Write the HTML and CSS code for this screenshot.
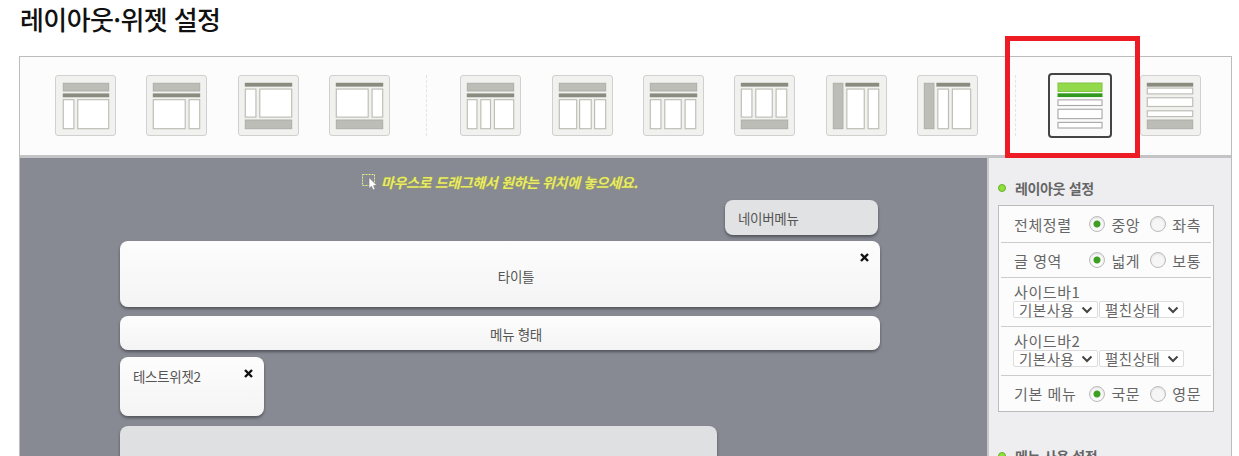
FILE: index.html
```html
<!DOCTYPE html>
<html lang="ko">

<head>
    <meta charset="UTF-8">
    <title>레이아웃·위젯 설정</title>
    <link rel="stylesheet" href="styles.css">
</head>

<body>
    <h1 class="page-title">레이아웃·위젯 설정</h1>

    <div class="frame">
        <div class="toolbar">
            <div class="thumbs">
                <svg class="thumb" viewBox="0 0 61 61"><rect class="fill" x="7.5" y="7.5" width="47" height="8"/><rect class="bar" x="7" y="18" width="48" height="4"/><rect class="col" x="7.5" y="24.5" width="11" height="30"/><rect class="col" x="22.5" y="24.5" width="32" height="30"/></svg>
                <svg class="thumb" viewBox="0 0 61 61"><rect class="fill" x="6.5" y="7.5" width="48" height="8"/><rect class="bar" x="6" y="18" width="49" height="4"/><rect class="col" x="6.5" y="24.5" width="33" height="30"/><rect class="col" x="43.5" y="24.5" width="11" height="30"/></svg>
                <svg class="thumb" viewBox="0 0 61 61"><rect class="bar" x="6" y="7" width="49" height="4"/><rect class="col" x="6.5" y="13.5" width="11" height="29"/><rect class="col" x="21.5" y="13.5" width="33" height="29"/><rect class="fill" x="6.5" y="45.5" width="48" height="9"/></svg>
                <svg class="thumb" viewBox="0 0 61 61"><rect class="bar" x="6" y="7" width="49" height="4"/><rect class="col" x="6.5" y="13.5" width="33" height="29"/><rect class="col" x="43.5" y="13.5" width="11" height="29"/><rect class="fill" x="6.5" y="45.5" width="48" height="9"/></svg>
            </div>
            <div class="sep sep-one"></div>
            <div class="thumbs">
                <svg class="thumb" viewBox="0 0 61 61"><rect class="fill" x="6.5" y="7.5" width="48" height="8"/><rect class="bar" x="6" y="18" width="49" height="4"/><rect class="col" x="6.5" y="24.5" width="10" height="30"/><rect class="col" x="20.5" y="24.5" width="10" height="30"/><rect class="col" x="34.5" y="24.5" width="20" height="30"/></svg>
                <svg class="thumb" viewBox="0 0 61 61"><rect class="fill" x="6.5" y="7.5" width="48" height="8"/><rect class="bar" x="6" y="18" width="49" height="4"/><rect class="col" x="6.5" y="24.5" width="18" height="30"/><rect class="col" x="27.5" y="24.5" width="12" height="30"/><rect class="col" x="43" y="24.5" width="11.5" height="30"/></svg>
                <svg class="thumb" viewBox="0 0 61 61"><rect class="fill" x="6.5" y="7.5" width="48" height="8"/><rect class="bar" x="6" y="18" width="49" height="4"/><rect class="col" x="6.5" y="24.5" width="11" height="30"/><rect class="col" x="21.5" y="24.5" width="17" height="30"/><rect class="col" x="42.5" y="24.5" width="11" height="30"/></svg>
                <svg class="thumb" viewBox="0 0 61 61"><rect class="bar" x="6" y="7" width="49" height="4"/><rect class="col" x="6.5" y="13.5" width="11" height="29"/><rect class="col" x="21.5" y="13.5" width="17" height="29"/><rect class="col" x="42.5" y="13.5" width="11" height="29"/><rect class="fill" x="6.5" y="45.5" width="48" height="9"/></svg>
                <svg class="thumb" viewBox="0 0 61 61"><rect class="fill" x="6.5" y="7.5" width="10" height="47"/><rect class="bar" x="19" y="7" width="35" height="4"/><rect class="col" x="20.5" y="13.5" width="18" height="41"/><rect class="col" x="42.5" y="13.5" width="11" height="41"/></svg>
                <svg class="thumb" viewBox="0 0 61 61"><rect class="fill" x="6.5" y="7.5" width="10" height="47"/><rect class="bar" x="19" y="7" width="35" height="4"/><rect class="col" x="20.5" y="13.5" width="11" height="41"/><rect class="col" x="35.5" y="13.5" width="19" height="41"/></svg>
            </div>
            <div class="sep sep-two"></div>
            <svg class="thumb thumb-on" viewBox="0 0 64 65"><rect class="fill-on" x="8.5" y="8.5" width="47" height="9"/><rect class="bar-on" x="8" y="19.5" width="48" height="4"/><rect class="col-on" x="8.5" y="26.5" width="47" height="6"/><rect class="col-on" x="8.5" y="36.5" width="47" height="10"/><rect class="col-on" x="8.5" y="50.5" width="47" height="6"/></svg>
            <svg class="thumb thumb-last" viewBox="0 0 61 61"><rect class="bar" x="6" y="7" width="48" height="4"/><rect class="col" x="6.5" y="12.5" width="47" height="6"/><rect class="col" x="6.5" y="22.5" width="47" height="9"/><rect class="col" x="6.5" y="36" width="47" height="6"/><rect class="fill" x="6.5" y="45.5" width="47" height="9"/></svg>
        </div>

        <div class="workspace">
            <div class="canvas">
                <div class="hint">
                    <svg class="hint-icon" viewBox="0 0 18 18">
                        <rect class="hint-box" x="1.5" y="1.5" width="12" height="11"/>
                        <path class="hint-cursor" d="M8 4.5 V15.5 L10.5 13.3 L12 17 L14 16 L12.5 12.5 H16 Z"/>
                    </svg>
                    <span>마우스로 드래그해서 원하는 위치에 놓으세요.</span>
                </div>
                <div class="column">
                    <div class="card card-nav">네이버메뉴</div>
                    <div class="card card-title">
                        타이틀
                        <svg class="close" viewBox="0 0 9 9"><path d="M1 1 L8 8 M8 1 L1 8"/></svg>
                    </div>
                    <div class="card card-menu">메뉴 형태</div>
                    <div class="card card-widget">
                        테스트위젯2
                        <svg class="close" viewBox="0 0 9 9"><path d="M1 1 L8 8 M8 1 L1 8"/></svg>
                    </div>
                    <div class="card card-empty"></div>
                </div>
            </div>

            <div class="side">
                <h2 class="side-title">레이아웃 설정</h2>
                <div class="options">
                    <div class="opt-row">
                        <span class="opt-label">전체정렬</span>
                        <span class="radio on"></span><span class="radio-text">중앙</span>
                        <span class="radio"></span><span class="radio-text">좌측</span>
                    </div>
                    <div class="opt-row">
                        <span class="opt-label">글 영역</span>
                        <span class="radio on"></span><span class="radio-text">넓게</span>
                        <span class="radio"></span><span class="radio-text">보통</span>
                    </div>
                    <div class="opt-row opt-stack">
                        <div class="opt-name">사이드바1</div>
                        <div class="selects">
                            <div class="select">기본사용<svg class="chevron" viewBox="0 0 12 8"><path d="M1.5 1.5 L6 6 L10.5 1.5"/></svg></div>
                            <div class="select">펼친상태<svg class="chevron" viewBox="0 0 12 8"><path d="M1.5 1.5 L6 6 L10.5 1.5"/></svg></div>
                        </div>
                    </div>
                    <div class="opt-row opt-stack">
                        <div class="opt-name">사이드바2</div>
                        <div class="selects">
                            <div class="select">기본사용<svg class="chevron" viewBox="0 0 12 8"><path d="M1.5 1.5 L6 6 L10.5 1.5"/></svg></div>
                            <div class="select">펼친상태<svg class="chevron" viewBox="0 0 12 8"><path d="M1.5 1.5 L6 6 L10.5 1.5"/></svg></div>
                        </div>
                    </div>
                    <div class="opt-row">
                        <span class="opt-label">기본 메뉴</span>
                        <span class="radio on"></span><span class="radio-text">국문</span>
                        <span class="radio"></span><span class="radio-text">영문</span>
                    </div>
                </div>
                <h2 class="side-title side-next">메뉴 사용 설정</h2>
            </div>
        </div>
    </div>

    <div class="marker"></div>
</body>

</html>
```

FILE: styles.css
```css
html,
body {
    margin: 0;
    height: 456px;
    overflow: hidden;
    background: #fff;
}

body {
    position: relative;
    font-family: "Noto Sans CJK KR", "Noto Sans", sans-serif;
    color: #555;
}

.page-title {
    margin: 0 0 0 20px;
    height: 56px;
    font-size: 26px;
    font-weight: 500;
    line-height: 38px;
    letter-spacing: -0.6px;
    color: #111;
}

.frame {
    width: 1211px;
    margin-left: 19px;
    border: 1px solid #bcbcbc;
    border-bottom: 0;
}

.toolbar {
    display: flex;
    align-items: flex-start;
    height: 101px;
    padding: 18px 0 0 35px;
    box-sizing: border-box;
    background: #fcfcfc;
    border-bottom: 3px solid #c4c4c6;
}

.thumbs {
    display: flex;
    gap: 30.4px;
}

.thumb {
    display: block;
    flex: none;
    width: 61px;
    height: 61px;
    box-sizing: border-box;
    border: 1px solid #d0d0ce;
    border-radius: 3px;
    background: #f1f1f0;
}

.thumb-on {
    width: 64px;
    height: 65px;
    margin-top: -2px;
    margin-left: 32px;
    border: 2px solid #444;
    border-radius: 4px;
    background: #fafafa;
}

.thumb-last {
    margin-left: 28px;
}

.fill {
    fill: #bcbdb6;
    stroke: #adaea6;
}

.bar {
    fill: #8b8c80;
}

.col {
    fill: #fff;
    stroke: #bdbdb5;
    stroke-width: 1.2;
}

.fill-on {
    fill: #93d94c;
    stroke: #7cc23a;
}

.bar-on {
    fill: #2f9a1e;
}

.col-on {
    fill: #fff;
    stroke: #a8a8a8;
    stroke-width: 1.2;
}

.sep {
    flex: none;
    width: 0;
    height: 61px;
    border-left: 1px dashed #e4e4e4;
}

.sep-one {
    margin: 0 33px 0 36px;
}

.sep-two {
    margin-left: 37px;
}

.workspace {
    display: flex;
}

.canvas {
    flex: none;
    width: 967px;
    height: 300px;
    padding: 15px 0 0 100px;
    box-sizing: border-box;
    background: #878a93;
}

.hint {
    display: flex;
    align-items: center;
    gap: 2px;
    width: 760px;
    height: 18px;
    margin-bottom: 9px;
    padding-left: 241px;
    box-sizing: border-box;
    font-size: 14px;
    font-weight: 700;
    font-style: italic;
    letter-spacing: -0.35px;
    color: #e9ec62;
    text-shadow: 0 0 2px #9a9c50;
    white-space: nowrap;
}

.hint-icon {
    flex: none;
    width: 18px;
    height: 18px;
}

.hint-box {
    fill: none;
    stroke: #e9ec8a;
    stroke-dasharray: 2 1;
}

.hint-cursor {
    fill: #fff;
    stroke: #777;
    stroke-width: 0.6;
}

.column {
    width: 760px;
}

.card {
    position: relative;
    box-sizing: border-box;
    border-radius: 8px;
    background: linear-gradient(#fdfdfd, #f4f4f4);
    box-shadow: 0 2px 3px rgba(50, 50, 55, 0.6);
    font-size: 13.5px;
    letter-spacing: -0.3px;
    color: #555;
}

.card-nav {
    width: 153px;
    height: 35px;
    margin: 0 2px 6px auto;
    padding-left: 13px;
    line-height: 37px;
    background: #e1e2e3;
}

.card-title {
    height: 66px;
    margin-bottom: 9px;
    line-height: 70px;
    text-align: center;
    padding-left: 32px;
}

.card-menu {
    height: 34px;
    margin-bottom: 7px;
    line-height: 37px;
    text-align: center;
    padding-left: 32px;
}

.card-widget {
    width: 144px;
    height: 59px;
    margin-bottom: 10px;
    padding-left: 13px;
    line-height: 38px;
}

.card-empty {
    width: 597px;
    height: 120px;
    background: #dfe0e1;
}

.close {
    position: absolute;
    top: 12px;
    right: 11px;
    width: 9px;
    height: 9px;
}

.close path {
    fill: none;
    stroke: #111;
    stroke-width: 2.4;
}

.side {
    flex: 1;
    padding: 21px 0 0 9px;
    background: #eeeef0;
    border-left: 2px solid #c9c9cc;
    box-sizing: border-box;
}

.side-title {
    position: relative;
    margin: 0 0 8px 17px;
    font-size: 14px;
    font-weight: 700;
    line-height: 18px;
    letter-spacing: -0.35px;
    color: #666;
}

.side-title::before {
    content: "";
    position: absolute;
    top: 5px;
    left: -17px;
    width: 8px;
    height: 8px;
    border-radius: 50%;
    background: #8fe03a;
    border: 1px solid #67b02a;
    box-sizing: border-box;
}

.side-next {
    margin-top: 35px;
}

.options {
    width: 216px;
    box-sizing: border-box;
    padding: 0 2px;
    background: #fcfcfc;
    border: 1px solid #bbb;
}

.opt-row {
    display: flex;
    align-items: center;
    height: 35px;
    padding-left: 13px;
    box-sizing: border-box;
    border-bottom: 1px solid #ccc;
    font-size: 15px;
    letter-spacing: 0.6px;
    color: #666;
}

.opt-row:first-child {
    height: 37px;
}

.opt-row:last-child {
    height: 35px;
    border-bottom: 0;
}

.opt-stack {
    display: block;
    height: 49px;
    padding-top: 4px;
}

.opt-name {
    height: 19px;
    line-height: 19px;
}

.opt-label {
    width: 76px;
    white-space: nowrap;
}

.radio {
    flex: none;
    width: 16px;
    height: 16px;
    margin-right: 6px;
    box-sizing: border-box;
    border: 1px solid #bbb;
    border-radius: 50%;
    background: #f6f6f6;
    box-shadow: inset 0 1px 2px #ddd;
}

.radio.on {
    background: radial-gradient(circle, #3f9f22 0 3px, #fafafa 4px);
}

.radio-text {
    width: 33px;
    margin-right: 6px;
    white-space: nowrap;
}

.selects {
    display: flex;
    gap: 1px;
    margin-left: -1px;
}

.select {
    display: flex;
    align-items: center;
    justify-content: space-between;
    width: 85px;
    height: 17px;
    padding: 0 4px 0 5px;
    box-sizing: border-box;
    border: 1px solid #ddd;
    border-radius: 2px;
    background: #fff;
    font-size: 14.5px;
    line-height: 15px;
    letter-spacing: 0.5px;
    white-space: nowrap;
}

.chevron {
    flex: none;
    width: 12px;
    height: 8px;
}

.chevron path {
    fill: none;
    stroke: #444;
    stroke-width: 2;
}

/* 빨간 표시 상자 */
.marker {
    position: absolute;
    top: 36px;
    left: 1005px;
    width: 135px;
    height: 122px;
    box-sizing: border-box;
    border: 5px solid #ed1c24;
}
```
